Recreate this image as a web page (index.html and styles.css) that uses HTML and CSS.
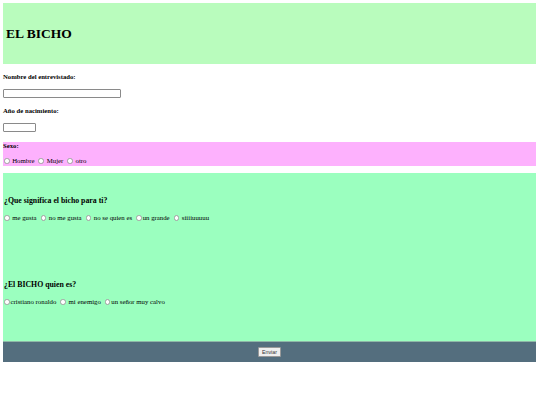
FILE: index.html
```html
<!DOCTYPE html>
<html lang="es">
<head>
<meta charset="utf-8">
<title>EL BICHO</title>
<link rel="stylesheet" href="styles.css">
</head>
<body>
<header class="top">
  <h1 class="title">EL BICHO</h1>
</header>
<form class="form">
  <div class="field">
    <p class="label">Nombre del entrevistado:</p>
    <input class="text-in text-long" type="text">
  </div>
  <div class="field">
    <p class="label">Año de nacimiento:</p>
    <input class="text-in text-short" type="text">
  </div>
  <section class="sexo">
    <p class="label label-tight">Sexo:</p>
    <div class="options">
      <label class="opt"><span class="radio"></span> Hombre</label>
      <label class="opt"><span class="radio"></span> Mujer</label>
      <label class="opt"><span class="radio"></span> otro</label>
    </div>
  </section>
  <section class="questions">
    <div class="q q1">
      <h3 class="q-title">¿Que significa el bicho para ti?</h3>
      <div class="options">
        <label class="opt"><span class="radio"></span> me gusta</label>
        <label class="opt"><span class="radio"></span> no me gusta</label>
        <label class="opt"><span class="radio"></span> no se quien es</label>
        <label class="opt"><span class="radio"></span>un grande</label>
        <label class="opt"><span class="radio"></span> siiiiuuuuu</label>
      </div>
    </div>
    <div class="q q2">
      <h3 class="q-title">¿El BICHO quien es?</h3>
      <div class="options">
        <label class="opt"><span class="radio"></span>cristiano ronaldo</label>
        <label class="opt"><span class="radio"></span> mi enemigo</label>
        <label class="opt"><span class="radio"></span>un señor muy calvo</label>
      </div>
    </div>
  </section>
  <footer class="bottom">
    <button class="send" type="button">Enviar</button>
  </footer>
</form>
</body>
</html>
```
FILE: styles.css
```css
* { box-sizing: border-box; }
body {
  margin: 3px 4px 3px 3px;
  font-family: "Liberation Serif", "Times New Roman", serif;
  color: #000;
  background: #fff;
}
.top {
  background: #b9fcbd;
  height: 61px;
  display: flex;
  align-items: center;
  padding-left: 3px;
}
.title {
  margin: 0;
  font-size: 13.5px;
  font-weight: bold;
}
.form { display: block; }
.field { display: flex; flex-direction: column; align-items: flex-start; }
.label {
  margin: 9px 0 9px 0;
  font-size: 6.7px;
  font-weight: bold;
  line-height: 7px;
}
.text-in {
  border: 1px solid #8a8a8a;
  border-radius: 1px;
  background: #fff;
  height: 9px;
  padding: 0;
  margin: 0;
}
.text-long { width: 118px; }
.text-short { width: 33px; }
.sexo {
  background: #fdb1fd;
  margin-top: 10px;
  padding: 0;
  height: 24px;
}
.label-tight { margin: 0 0 8px 0; line-height: 7px; }
.options {
  display: flex;
  align-items: center;
  font-size: 6.8px;
  line-height: 8px;
}
.opt { display: flex; align-items: center; margin-right: 3px; white-space: pre; }
.radio {
  display: inline-block;
  width: 5.5px;
  height: 5.5px;
  border-radius: 50%;
  border: 0.5px solid #a0a0a0;
  background: #fff;
  margin-left: 1px;
  margin-right: 1px;
}
.questions {
  background: #9bffbf;
  margin-top: 7px;
  height: 168px;
  padding-top: 23px;
}
.q-title {
  margin: 0 0 9px 1px;
  font-size: 7.8px;
  font-weight: bold;
  line-height: 9px;
}
.q2 { margin-top: 58px; }
.bottom {
  background: #546e7e;
  height: 21px;
  display: flex;
  align-items: center;
  justify-content: center;
  border-top: 1px solid #8fb8a8;
}
.send {
  font-family: "Liberation Sans", Arial, sans-serif;
  font-size: 5.3px;
  padding: 1px 3px;
  border: 0.5px solid #999;
  background: #efefef;
  border-radius: 1px;
  color: #333;
  line-height: 6px;
}
```
